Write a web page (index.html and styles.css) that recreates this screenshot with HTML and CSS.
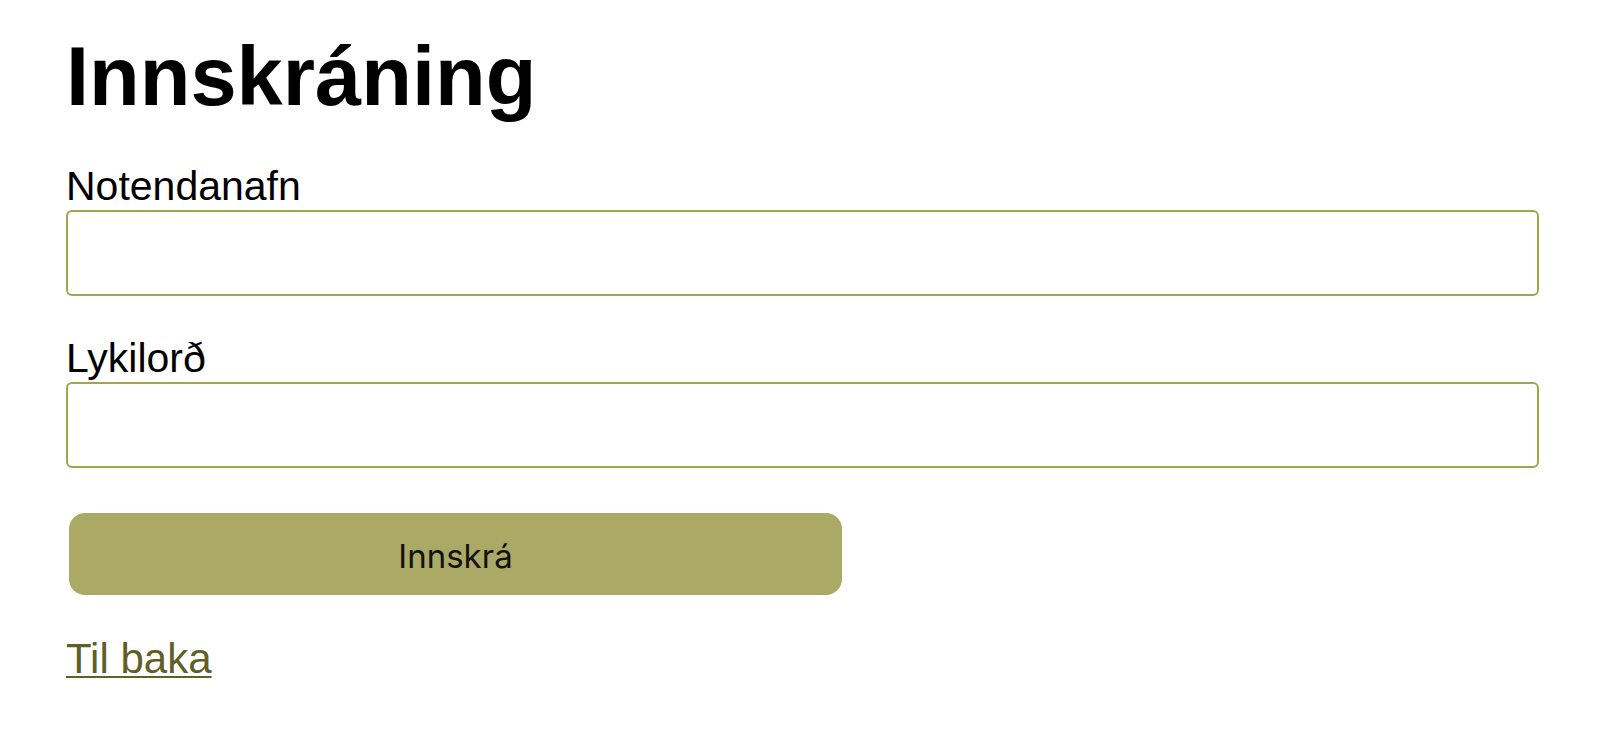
FILE: index.html
```html
<!DOCTYPE html>
<html lang="is">
<head>
<meta charset="utf-8">
<title>Innskráning</title>
<link rel="stylesheet" href="styles.css">
</head>
<body>
<main class="page">
  <h1 class="title">Innskráning</h1>
  <form class="login-form">
    <div class="field field-first">
      <label class="field-label" for="username">Notendanafn</label>
      <input class="field-input" id="username" type="text">
    </div>
    <div class="field field-second">
      <label class="field-label" for="password">Lykilorð</label>
      <input class="field-input" id="password" type="password">
    </div>
    <button class="submit-btn" type="submit">Innskrá</button>
  </form>
  <a class="back-link" href="#">Til baka</a>
</main>
</body>
</html>
```

FILE: styles.css
```css
* {
  box-sizing: border-box;
}

html, body {
  margin: 0;
  padding: 0;
  background: #ffffff;
}

body {
  font-family: "Liberation Sans", Arial, Helvetica, sans-serif;
  color: #000000;
}

.page {
  padding: 35px 61px 0 66px;
}

.title {
  margin: 0 0 48px 0;
  font-size: 83px;
  line-height: 83px;
  font-weight: 700;
}

.login-form {
  display: flex;
  flex-direction: column;
  align-items: flex-start;
}

.field {
  display: flex;
  flex-direction: column;
  width: 100%;
}

.field-second {
  margin-top: 42px;
}

.field-label {
  display: block;
  font-size: 41px;
  line-height: 41px;
  margin-bottom: 3px;
}

.field-input {
  display: block;
  width: 100%;
  height: 86px;
  border: 2px solid #a4a448;
  border-radius: 6px;
  background: #ffffff;
  font-family: inherit;
  font-size: 28px;
  padding: 0 16px;
  outline: none;
}

.submit-btn {
  margin: 45px 0 0 3px;
  width: 773px;
  height: 82px;
  padding: 4px 0 0 0;
  border: none;
  border-radius: 16px;
  background: #aaa966;
  color: #111111;
  font-family: Inter, "Noto Sans", sans-serif;
  font-size: 33px;
  font-weight: 400;
  cursor: pointer;
}

.back-link {
  display: inline-block;
  margin-top: 43px;
  font-size: 42px;
  line-height: 41px;
  color: #5f5f26;
  text-decoration: underline;
  text-decoration-thickness: 2px;
  text-underline-offset: 3px;
}
```
